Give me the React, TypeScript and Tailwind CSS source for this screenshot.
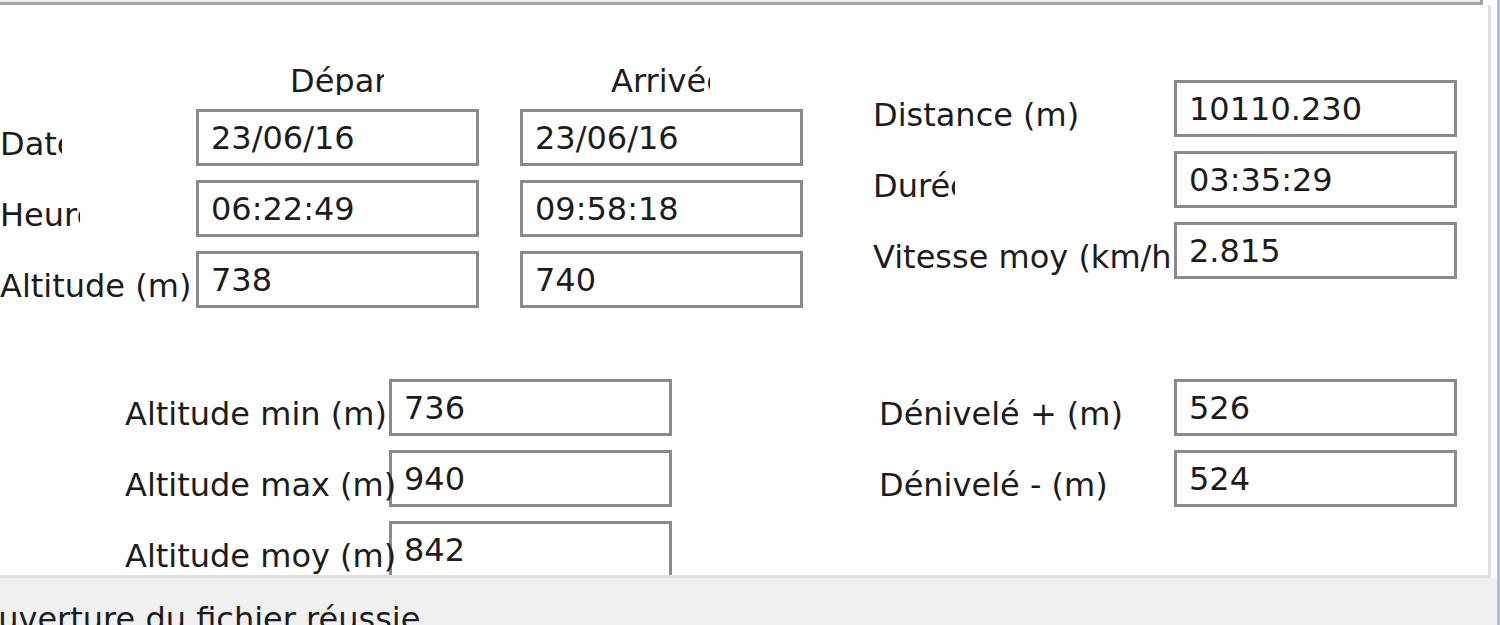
import React from 'react';

function Field({ value }: { value: string }) {
  return (
    <div className="h-[57px] w-[283px] border-[3px] border-[#8a8a8a] bg-white flex items-center pl-[12px] leading-[38px] whitespace-nowrap">
      {value}
    </div>
  );
}

function Label({ text, clip }: { text: string; clip?: string }) {
  return (
    <div className="h-[57px] pt-[16px] leading-[38px] whitespace-nowrap">
      <div className={clip ? `${clip} overflow-hidden` : ''}>{text}</div>
    </div>
  );
}

export default function App() {
  return (
    <div className="w-[1500px] h-[625px] overflow-hidden bg-white flex font-['DejaVu_Sans',sans-serif] text-[32px] text-[#1c1c1c]">
      <div className="w-[1497px] flex flex-col">
        <div className="h-[5px] w-[1483px] shrink-0 border-b-[3px] border-r-[3px] border-[#a3a3a3] bg-[#ececec] rounded-br-[2px]" />

        <div className="flex-1 w-[1491px] border-r-[3px] border-b-[3px] border-[#e0e0e0] overflow-hidden">
          {/* départ / arrivée + totaux */}
          <div className="flex items-start">
            <div className="mt-[57px]">
              <div className="grid grid-cols-[196px_283px_41px_283px] h-[33px] mb-[14px] leading-[38px]">
                <div />
                <div className="ml-[94px] w-[94px] h-[33px] overflow-hidden whitespace-nowrap">Départ</div>
                <div />
                <div className="ml-[91px] w-[99px] h-[33px] overflow-hidden whitespace-nowrap">Arrivée</div>
              </div>
              <div className="grid grid-cols-[196px_283px_41px_283px] gap-y-[14px]">
                <Label text="Date" clip="w-[62px]" />
                <Field value="23/06/16" />
                <div />
                <Field value="23/06/16" />

                <Label text="Heure" clip="w-[80px]" />
                <Field value="06:22:49" />
                <div />
                <Field value="09:58:18" />

                <Label text="Altitude (m)" />
                <Field value="738" />
                <div />
                <Field value="740" />
              </div>
            </div>

            <div className="ml-[70px] mt-[75px] grid grid-cols-[301px_283px] gap-y-[14px]">
              <Label text="Distance (m)" />
              <Field value="10110.230" />

              <Label text="Durée" clip="w-[82px]" />
              <Field value="03:35:29" />

              <Label text="Vitesse moy (km/h)" clip="w-[301px]" />
              <Field value="2.815" />
            </div>
          </div>

          {/* altitudes + dénivelés */}
          <div className="flex items-start mt-[71px]">
            <div className="ml-[125px] grid grid-cols-[264px_283px] gap-y-[14px]">
              <div className="relative z-10"><Label text="Altitude min (m)" /></div>
              <Field value="736" />
              <div className="relative z-10"><Label text="Altitude max (m)" /></div>
              <Field value="940" />
              <div className="relative z-10"><Label text="Altitude moy (m)" /></div>
              <Field value="842" />
            </div>

            <div className="ml-[207px] grid grid-cols-[295px_283px] gap-y-[14px]">
              <Label text="Dénivelé + (m)" />
              <Field value="526" />
              <Label text="Dénivelé - (m)" />
              <Field value="524" />
            </div>
          </div>
        </div>

        <div className="h-[47px] shrink-0 bg-[#f0f0f0] pt-[22px] leading-[38px] whitespace-nowrap">
          <div className="ml-[-27px]">Ouverture du fichier réussie</div>
        </div>
      </div>
      <div className="w-[3px] bg-[#a6c2ea]" />
    </div>
  );
}
